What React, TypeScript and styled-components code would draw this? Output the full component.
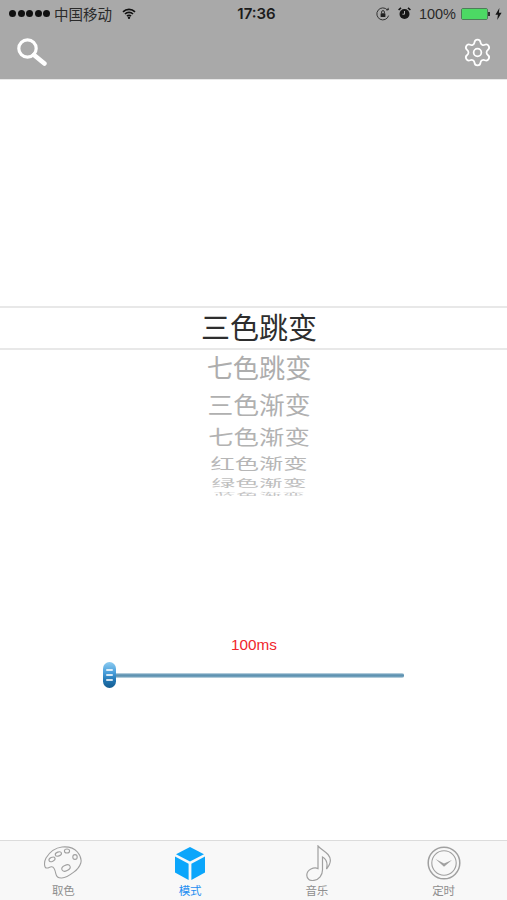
import React from 'react';
import styled, {createGlobalStyle} from 'styled-components';
import {Settings} from 'lucide-react';

const CJK = '"Noto Sans CJK SC", "Liberation Sans", sans-serif';

const GlobalStyle = createGlobalStyle`
  html, body {
    margin: 0;
    padding: 0;
    background: white;
    font-family: "Liberation Sans", "Noto Sans CJK SC", sans-serif;
  }
`;

const modes = [
  {name: '七色跳变', size: 26.2, height: 38, scale: 1, color: '#adadad'},
  {name: '三色渐变', size: 25.8, height: 36, scale: 0.92, color: '#b0b0b0'},
  {name: '七色渐变', size: 25.4, height: 30, scale: 0.8, color: '#b2b2b2'},
  {name: '红色渐变', size: 24.3, height: 22, scale: 0.62, color: '#b6b6b6'},
  {name: '绿色渐变', size: 23.7, height: 18, scale: 0.42, color: '#bebebe'},
  {name: '蓝色渐变', size: 23, height: 4, scale: 0.24, color: '#c6c6c6'},
];

const App: React.FC = () => {
  return (
    <Page>
      <GlobalStyle/>
      <Header>
        <StatusBar>
          <StatusLeft>
            <Dots>
              {[0, 1, 2, 3, 4].map((i) => <Dot key={i}/>)}
            </Dots>
            <Carrier>中国移动</Carrier>
            <svg width="14" height="11" viewBox="0 0 14 11">
              <path d="M1 3.8a8.6 8.6 0 0 1 12 0M3 6a5.7 5.7 0 0 1 8 0M5 8.1a2.8 2.8 0 0 1 4 0" fill="none" stroke="#111" strokeWidth="1.7"/>
              <circle cx="7" cy="9.7" r="1.2" fill="#111"/>
            </svg>
          </StatusLeft>
          <Clock>17:36</Clock>
          <StatusRight>
            <svg width="14" height="14" viewBox="0 0 14 14">
              <path d="M12.6 8.6A6 6 0 1 1 11.4 3" fill="none" stroke="#333" strokeWidth="1"/>
              <path d="M10 3.6l3-.6-.6-2.4z" fill="#333"/>
              <rect x="4.6" y="6.2" width="4.8" height="3.8" rx=".6" fill="#222"/>
              <path d="M5.6 6.2V5a1.4 1.4 0 0 1 2.8 0v1.2" fill="none" stroke="#222" strokeWidth=".9"/>
            </svg>
            <AlarmWrap>
              <svg width="13" height="13" viewBox="0 0 13 13">
                <circle cx="6.5" cy="7" r="5" fill="#161616"/>
                <path d="M.6 3 3 .8M12.4 3 10 .8" stroke="#161616" strokeWidth="1.6"/>
                <path d="M6.5 4v3.2H4.4" fill="none" stroke="#aaa" strokeWidth="1"/>
              </svg>
            </AlarmWrap>
            <Percent>100%</Percent>
            <Battery><BatteryFill/></Battery>
            <BatteryCap/>
            <svg width="7" height="12" viewBox="0 0 7 12">
              <path d="M4.4 0 .4 6.8h2.5L2.2 12l4.4-7.2H3.9z" fill="#161616"/>
            </svg>
          </StatusRight>
        </StatusBar>
        <NavBar>
          <svg width="30" height="30" viewBox="0 0 30 30">
            <circle cx="10.5" cy="10.5" r="8.7" fill="none" stroke="white" strokeWidth="3.2"/>
            <path d="M17 17 27.4 25.6" stroke="white" strokeWidth="4.6" strokeLinecap="round"/>
          </svg>
          <GearIcon size={31} color="white" strokeWidth={1.35}/>
        </NavBar>
      </Header>

      <Content>
        <Picker>
          <SelectedRow>三色跳变</SelectedRow>
          <Fade>
            {modes.map((mode) => (
              <PickerRow key={mode.name} $height={mode.height} $color={mode.color}>
                <PickerText $size={mode.size} $scale={mode.scale}>{mode.name}</PickerText>
              </PickerRow>
            ))}
          </Fade>
        </Picker>

        <SliderBlock>
          <SliderValue>100ms</SliderValue>
          <SliderTrack>
            <SliderThumb>
              <ThumbLine/>
              <ThumbLine/>
              <ThumbLine/>
            </SliderThumb>
          </SliderTrack>
        </SliderBlock>
      </Content>

      <TabBar>
        <Tab>
          <TabIcon>
            <svg width="40" height="34" viewBox="-1 0 40 34" fill="none" stroke="#a0a0a0" strokeWidth="1.1">
              <path d="M2 12C6 5.5 11 1.8 18 1c6.4-.6 12 1 15.4 5 3.4 4 4.4 7.4 3.4 11-1.2 4-4 7-7.4 9.4-3.6 2.8-7.6 5.4-11.6 5.6-3.4.2-5.4-1.4-6-4.4-.6-3.2-1.4-6.6-4-6.8-2.2-.2-3 1.4-5 1.2C.6 22.6-.6 17 2 12z"/>
              <ellipse cx="8" cy="13.4" rx="3.2" ry="2" transform="rotate(-25 8 13.4)"/>
              <ellipse cx="14.4" cy="8" rx="3.2" ry="2" transform="rotate(-20 14.4 8)"/>
              <ellipse cx="23" cy="5" rx="2.6" ry="2"/>
              <ellipse cx="31" cy="11" rx="2.2" ry="2.4"/>
              <ellipse cx="22" cy="22" rx="4.4" ry="2.8" transform="rotate(-25 22 22)"/>
            </svg>
          </TabIcon>
          <TabLabel>取色</TabLabel>
        </Tab>
        <Tab>
          <TabIcon>
            <svg width="30" height="33" viewBox="0 0 30 33" fill="#0ba6fb">
              <path d="M15 0 29 7.2 15 14.6 1 7.2z"/>
              <path d="M0 9.6 13.6 16.8V33L0 25.4z"/>
              <path d="M30 9.6 16.4 16.8V33L30 25.4z"/>
            </svg>
          </TabIcon>
          <TabLabel $active>模式</TabLabel>
        </Tab>
        <Tab>
          <TabIcon>
            <NoteIcon width="26" height="36" viewBox="0 0 26 36" fill="none" stroke="#a0a0a0" strokeWidth="1.2">
              <path d="M12 1V23.6C8 21.8 1 24.4.8 30 .6 34 4 36 8 35.4 13 34.6 16.5 30 16.5 25V12C20 14 22 18 20.5 24 25.5 18 25 13 22 9.5 19 6 14.5 4 12 1z"/>
            </NoteIcon>
          </TabIcon>
          <TabLabel>音乐</TabLabel>
        </Tab>
        <Tab>
          <TabIcon>
            <svg width="34" height="34" viewBox="0 0 34 34" fill="none" stroke="#a0a0a0">
              <circle cx="17" cy="17" r="15.8" strokeWidth="1.5"/>
              <circle cx="17" cy="17" r="12.2" strokeWidth="1.1"/>
              <path d="M8.5 13 17 20.8 25 14 17 17.4z" fill="#a0a0a0" stroke="none"/>
            </svg>
          </TabIcon>
          <TabLabel>定时</TabLabel>
        </Tab>
      </TabBar>
    </Page>
  );
};

const Page = styled.div`
  width: 507px;
  height: 900px;
  display: flex;
  flex-direction: column;
  overflow: hidden;
  background: white;
`;

const Header = styled.div`
  height: 79px;
  flex: none;
  background-color: #a9a9a9;
  border-bottom: 1px solid #e8e8e8;
`;

const StatusBar = styled.div`
  height: 27px;
  display: grid;
  grid-template-columns: 1fr auto 1fr;
  align-items: center;
  padding: 0 5px 0 9px;
  color: #1c1c1c;
`;

const StatusLeft = styled.div`
  display: flex;
  align-items: center;
`;

const Dots = styled.div`
  display: flex;
  gap: 1.5px;
  margin-right: 4px;
`;

const Dot = styled.span`
  width: 7px;
  height: 7px;
  border-radius: 50%;
  background: #111;
`;

const Carrier = styled.span`
  font-family: ${CJK};
  font-size: 14.5px;
  line-height: 20px;
  margin-right: 10px;
  color: #2a2a2a;
`;

const Clock = styled.span`
  font-family: Inter, sans-serif;
  font-size: 15px;
  font-weight: 600;
  color: #1c1c1c;
  margin-left: 2px;
`;

const StatusRight = styled.div`
  display: flex;
  align-items: center;
  justify-content: flex-end;
`;

const AlarmWrap = styled.span`
  display: flex;
  margin: 0 8px;
`;

const Percent = styled.span`
  font-size: 14.5px;
  color: #2a2a2a;
  margin-right: 5px;
`;

const Battery = styled.span`
  width: 27px;
  height: 12px;
  box-sizing: border-box;
  border: 1px solid #4d7d58;
  border-radius: 2px;
  display: flex;
`;

const BatteryFill = styled.span`
  flex: 1;
  background: #4cd964;
`;

const BatteryCap = styled.span`
  width: 2px;
  height: 4px;
  background: #333;
  margin-right: 5px;
`;

const NavBar = styled.div`
  height: 52px;
  display: flex;
  align-items: center;
  justify-content: space-between;
  padding: 0 14px 4px 17px;
`;

const GearIcon = styled(Settings)`
  margin-bottom: 2px;
`;

const Content = styled.div`
  flex: 1;
  min-height: 0;
  display: flex;
  flex-direction: column;
`;

const Picker = styled.div`
  margin-top: 226px;
  display: flex;
  flex-direction: column;
`;

const SelectedRow = styled.div`
  height: 36px;
  padding: 0 0 4px 11px;
  border-top: 2px solid #e8e8e8;
  border-bottom: 2px solid #e8e8e8;
  display: flex;
  align-items: center;
  justify-content: center;
  font-family: ${CJK};
  font-size: 29px;
  color: #2e2e2e;
`;

const Fade = styled.div`
  display: flex;
  flex-direction: column;
  margin-top: -2px;
  overflow: hidden;
`;

const PickerRow = styled.div<{$height: number; $color: string}>`
  height: ${(p) => p.$height}px;
  padding-left: 11px;
  display: flex;
  align-items: center;
  justify-content: center;
  color: ${(p) => p.$color};
  font-family: ${CJK};
`;

const PickerText = styled.span<{$size: number; $scale: number}>`
  font-size: ${(p) => p.$size}px;
  line-height: 1;
  transform: scaleY(${(p) => p.$scale});
`;

const SliderBlock = styled.div`
  margin-top: 140px;
  display: flex;
  flex-direction: column;
  align-items: center;
`;

const SliderValue = styled.div`
  font-size: 15.3px;
  line-height: 18px;
  color: #f0262c;
  margin: 0 0 19px 1px;
`;

const SliderTrack = styled.div`
  position: relative;
  width: 296px;
  height: 5px;
  margin-left: 4px;
  border-radius: 2px;
  background: linear-gradient(#cfe0ea, #5f93b2 35%, #5f93b2 65%, #d2e2ea);
`;

const SliderThumb = styled.div`
  position: absolute;
  left: -5px;
  top: -11px;
  width: 13px;
  height: 26px;
  border-radius: 7px;
  background: linear-gradient(#8ccbf0, #4a9fdb 40%, #2277b4 70%, #155d90);
  display: flex;
  flex-direction: column;
  align-items: center;
  justify-content: center;
  gap: 3px;
`;

const ThumbLine = styled.span`
  width: 7px;
  height: 2px;
  border-radius: 1px;
  background: rgba(255, 255, 255, 0.8);
`;

const TabBar = styled.div`
  height: 59px;
  flex: none;
  display: grid;
  grid-template-columns: repeat(4, 1fr);
  background: #f8f8f8;
  border-top: 1px solid #dcdcdc;
`;

const Tab = styled.div`
  display: flex;
  flex-direction: column;
  align-items: center;
`;

const TabIcon = styled.div`
  height: 44px;
  display: flex;
  align-items: center;
  justify-content: center;
`;

const NoteIcon = styled.svg`
  margin-left: 5px;
`;

const TabLabel = styled.span<{$active?: boolean}>`
  font-family: ${CJK};
  font-size: 11.5px;
  line-height: 14px;
  margin-top: -2px;
  color: ${(p) => (p.$active ? '#1f8ef1' : '#8e8e8e')};
`;

export default App;
